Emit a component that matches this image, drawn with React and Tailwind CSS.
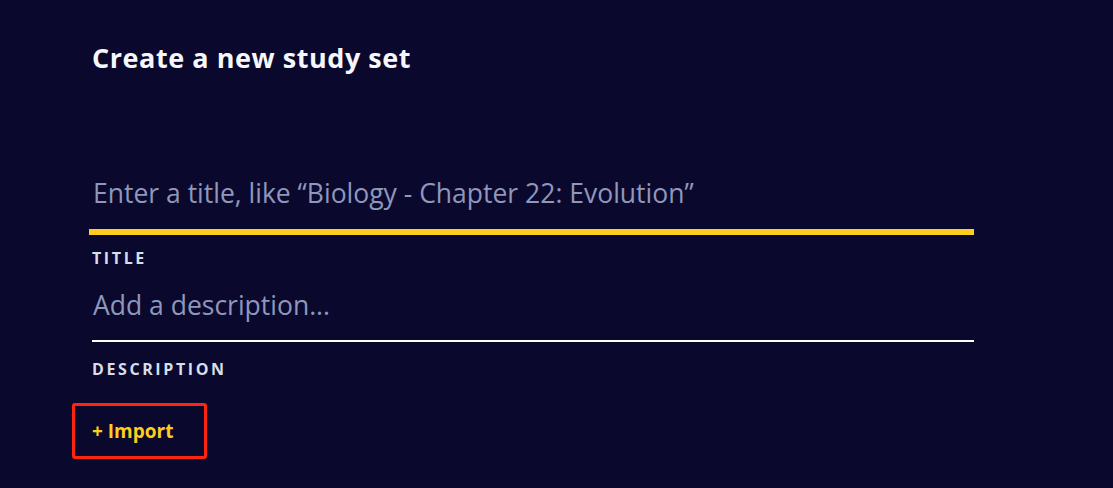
export default function App() {
  const font = { fontFamily: '"Open Sans", "Lato", sans-serif' };
  return (
    <div className="w-[1113px] h-[488px] bg-[#0a092d] overflow-hidden" style={font}>
      <div className="pl-[92px] pt-[40px] w-[974px]">
        <h1 className="text-[27px] leading-[36px] font-bold text-[#f6f7fb] tracking-[0.55px]">Create a new study set</h1>
        <div className="mt-[101px]">
          <div className="pl-[1px] text-[26.5px] leading-[32px] text-[#8f97bb] font-normal">Enter a title, like “Biology - Chapter 22: Evolution”</div>
          <div className="mt-[20px] -ml-[3px] h-[6px] bg-[#ffcd1f]"></div>
          <div className="mt-[14px] text-[16px] leading-[18px] font-bold tracking-[2.6px] text-[#d9dde8]">TITLE</div>
        </div>
        <div className="mt-[22px]">
          <div className="pl-[1px] text-[26.5px] leading-[32px] text-[#8f97bb]">Add a description...</div>
          <div className="mt-[19px] h-[2px] bg-[#ffffff]"></div>
          <div className="mt-[18px] text-[16px] leading-[18px] font-bold tracking-[2.6px] text-[#d9dde8]">DESCRIPTION</div>
        </div>
      </div>
      <div className="ml-[72px] mt-[25px] w-[135px] h-[56px] border-[3px] border-[#ff2412] rounded-[3px] flex items-center pl-[17px]">
        <span className="text-[19px] font-bold text-[#ffcd1f]">+ Import</span>
      </div>
    </div>
  );
}
